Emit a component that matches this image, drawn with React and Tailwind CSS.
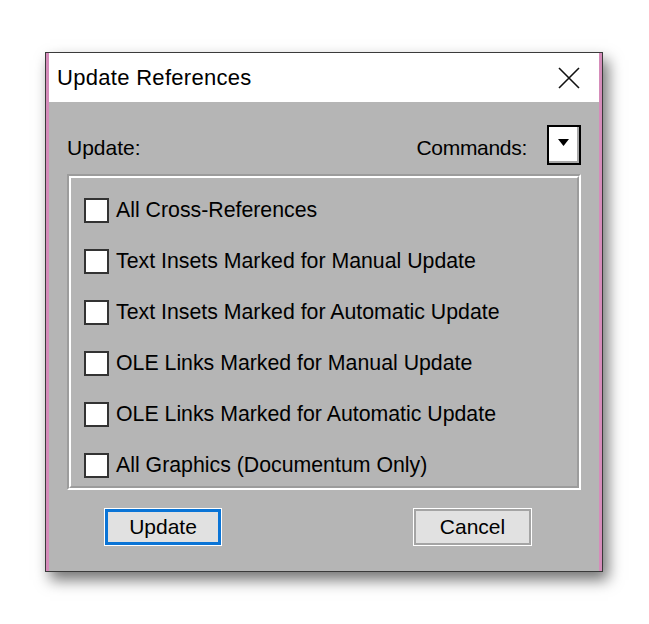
import React from 'react';

const opcje = [
  "All Cross-References",
  "Text Insets Marked for Manual Update",
  "Text Insets Marked for Automatic Update",
  "OLE Links Marked for Manual Update",
  "OLE Links Marked for Automatic Update",
  "All Graphics (Documentum Only)",
];

const Checkbox = ({ label }) => (
  <div className="flex items-center h-[51px]">
    <div className="w-[25px] h-[25px] bg-white border-2 border-[#333333] shrink-0" />
    <span className="ml-[7px] text-[21.3px] leading-none text-black">{label}</span>
  </div>
);

export default function App() {
  return (
    <div className="min-h-[624px] bg-white pt-[52px] pl-[45px]" style={{ fontFamily: '"Liberation Sans", Arial, sans-serif' }}>
      <div className="w-[558px] h-[520px] border border-[#3a3a3a] shadow-[5px_8px_14px_rgba(0,0,0,0.55)] flex flex-col">
        <div className="flex-1 flex flex-col border-l-[3px] border-r-[3px] border-[#d58cba]">
          {/* title bar */}
          <div className="h-[49px] bg-white flex items-center justify-between pl-[8px] pr-[19px]">
            <span className="text-[22px] text-black tracking-[0.3px]">Update References</span>
            <svg width="22" height="22" viewBox="0 0 22 22">
              <path d="M1 1 L21 21 M21 1 L1 21" stroke="#111" strokeWidth="1.6" fill="none" />
            </svg>
          </div>

          {/* body */}
          <div className="flex-1 bg-[#b5b5b5] flex flex-col">
            <div className="flex items-center justify-between px-[18px] pt-[23px] h-[63px]">
              <span className="text-[21px] text-black mt-[5px]">Update:</span>
              <div className="flex items-center">
                <span className="text-[21px] text-black mr-[20px] mt-[5px] tracking-[-0.3px]">Commands:</span>
                <div className="w-[34px] h-[40px] border-2 border-black bg-[#a8a8a8] flex">
                  <div className="flex-1 bg-white mr-[2px] mb-[2px] flex items-start justify-center pt-[12px]">
                    <svg width="11" height="7" viewBox="0 0 11 7">
                      <path d="M0 0 L11 0 L5.5 7 Z" fill="#000" />
                    </svg>
                  </div>
                </div>
              </div>
            </div>

            {/* group box */}
            <div className="mx-[18px] mt-[9px] h-[316px] border-2 border-t-[#9c9c9c] border-l-[#9c9c9c] border-b-white border-r-white flex">
              <div className="flex-1 border-2 border-t-white border-l-white border-b-[#9c9c9c] border-r-[#9c9c9c] pl-[13px] pt-[7px]">
                {opcje.map((o) => (
                  <Checkbox key={o} label={o} />
                ))}
              </div>
            </div>

            {/* buttons */}
            <div className="flex justify-between pl-[55px] pr-[67px] mt-[18px]">
              <button className="w-[118px] h-[38px] border border-white bg-white">
                <div className="w-full h-full border-[3px] border-[#0a74d6] bg-[#e1e1e1] flex items-center justify-center text-[21px] text-black">
                  Update
                </div>
              </button>
              <button className="w-[119px] h-[38px] border border-white bg-white">
                <div className="w-full h-full border-2 border-[#a4a4a4] bg-[#e1e1e1] flex items-center justify-center text-[21px] text-black">
                  Cancel
                </div>
              </button>
            </div>
          </div>
        </div>
      </div>
    </div>
  );
}
